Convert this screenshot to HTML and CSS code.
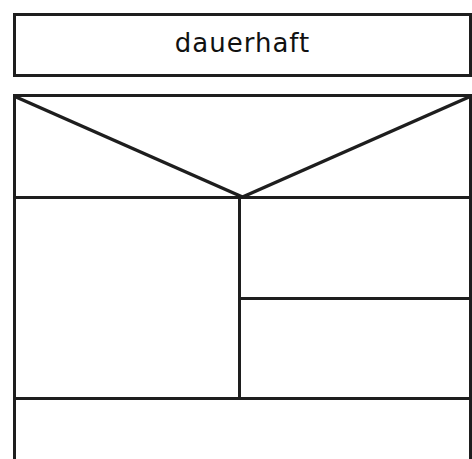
FILE: index.html
```html
<!DOCTYPE html>
<html lang="de">
<head>
    <meta charset="UTF-8">
    <meta name="viewport" content="width=device-width, initial-scale=1.0">
    <title>dauerhaft</title>
    <link rel="stylesheet" href="styles.css">
</head>
<body>
    <div class="title">dauerhaft</div>

    <!-- Wireframe layout -->
    <div class="frame">
        <div class="head">
            <svg viewBox="0 0 453 99" preserveAspectRatio="none">
                <line x1="0" y1="0" x2="226.5" y2="100" />
                <line x1="453" y1="0" x2="226.5" y2="100" />
            </svg>
        </div>
        <div class="middle">
            <div class="left"></div>
            <div class="right">
                <div class="right-top"></div>
                <div class="right-bottom"></div>
            </div>
        </div>
        <div class="foot"></div>
    </div>
</body>
</html>
```

FILE: styles.css
```css
body {
    margin: 0;
    padding: 13px 0 0 13px;
    background-color: #ffffff;
    overflow: hidden;
}

.title {
    box-sizing: border-box;
    width: 459px;
    height: 64px;
    border: 3px solid #1e1e1e;
    display: flex;
    align-items: center;
    justify-content: center;
    padding-bottom: 4px;
    font-family: "DejaVu Sans", sans-serif;
    font-size: 26px;
    letter-spacing: 1px;
    color: #111;
}

.frame {
    box-sizing: border-box;
    width: 459px;
    margin-top: 17px;
    border: 3px solid #1e1e1e;
    border-bottom: none;
}

.head {
    height: 99px;
    border-bottom: 3px solid #1e1e1e;
}

.head svg {
    display: block;
    width: 100%;
    height: 100%;
    overflow: visible;
}

.head line {
    stroke: #1e1e1e;
    stroke-width: 3.5;
    vector-effect: non-scaling-stroke;
}

.middle {
    display: grid;
    grid-template-columns: 225px 1fr;
    height: 198px;
}

.left {
    border-right: 3px solid #1e1e1e;
}

.right {
    display: flex;
    flex-direction: column;
}

.right-top {
    height: 98px;
    border-bottom: 3px solid #1e1e1e;
}

.right-bottom {
    flex: 1;
}

.foot {
    height: 80px;
    border-top: 3px solid #1e1e1e;
}
```
